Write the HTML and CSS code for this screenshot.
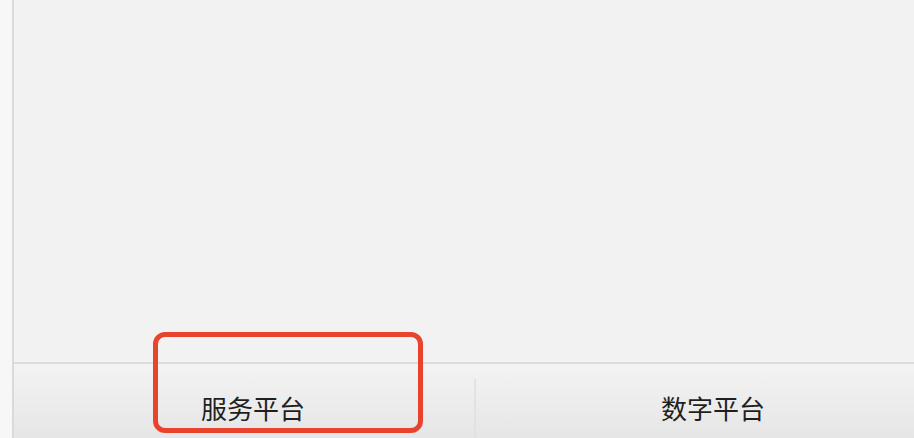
FILE: index.html
```html
<!DOCTYPE html>
<html lang="zh-CN">
<head>
    <meta charset="UTF-8">
    <title>平台</title>
    <link rel="stylesheet" href="styles.css">
</head>
<body>

    <div class="page">
        <div class="rail"></div>
        <div class="main">
            <div class="content"></div>
            <div class="tabbar">
                <div class="tab tab-left">服务平台</div>
                <div class="divider"></div>
                <div class="tab tab-right">数字平台</div>
            </div>
        </div>
    </div>

    <!-- annotation box over the first tab -->
    <div class="highlight"></div>

</body>
</html>
```

FILE: styles.css
```css
html, body {
    margin: 0;
    height: 100%;
    overflow: hidden;
}
body {
    font-family: "Noto Sans CJK SC", "Noto Sans", sans-serif;
    background-color: #f2f2f2;
    position: relative;
}
.page {
    display: flex;
    height: 438px;
}
.rail {
    width: 12px;
    background-color: #f7f7f7;
    border-right: 2px solid #dadada;
}
.main {
    flex: 1;
    display: flex;
    flex-direction: column;
}
.content {
    height: 362px;
    background-color: #f2f2f2;
    border-bottom: 2px solid #dcdcdc;
}
.tabbar {
    flex: 1;
    display: grid;
    grid-template-columns: 460px 2px 1fr;
    background: linear-gradient(to bottom, #f3f3f3, #e6e6e6);
}
.tab {
    padding-top: 31px;
    font-size: 26px;
    line-height: 26px;
    color: #1f1f1f;
    text-align: center;
}
.tab-left {
    padding-left: 18px;
}
.tab-right {
    padding-left: 36px;
}
.divider {
    margin-top: 15px;
    background-color: #e2e2e2;
}
.highlight {
    position: absolute;
    left: 153px;
    top: 332px;
    width: 270px;
    height: 101px;
    box-sizing: border-box;
    border: 5px solid #e8432d;
    border-radius: 12px;
}
```
